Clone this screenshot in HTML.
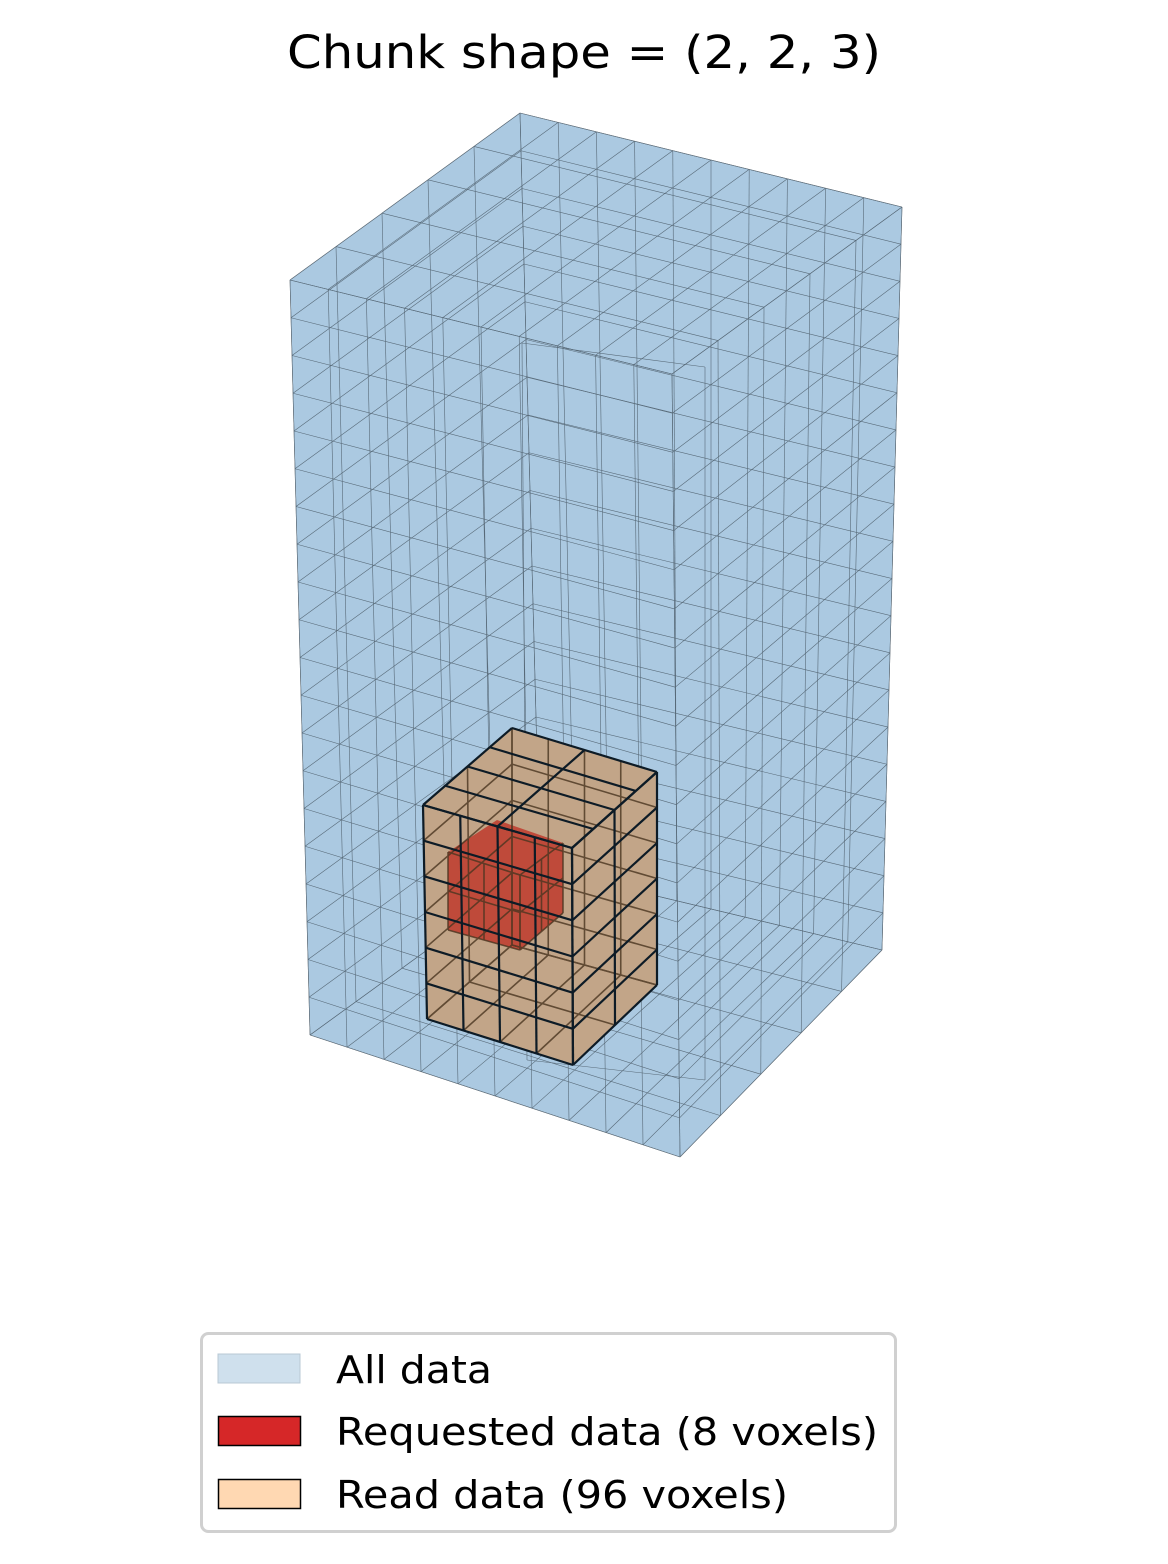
<!DOCTYPE html>
<html><head><meta charset="utf-8"><style>
html,body{margin:0;padding:0;background:#fff;}
svg{display:block;}
text{font-family:"DejaVu Sans","Liberation Sans",sans-serif;fill:#000;}
</style></head><body>
<svg id="s" width="1168" height="1564" viewBox="0 0 1168 1564" xmlns="http://www.w3.org/2000/svg">
<text x="584" y="68" font-size="45" text-anchor="middle" textLength="594" lengthAdjust="spacingAndGlyphs">Chunk shape = (2, 2, 3)</text>
<polygon points="290,280 520,113 902,207 882,950 680,1157 310,1035" fill="#abc9e1"/>
<g id="bg" stroke="#3c4a55" stroke-width="0.6" fill="none" opacity="0.75"></g>
<polygon points="423,805 512,728 657,772 657,985 572,1065 427,1019" fill="#c2a588"/>
<polygon points="448,852 497,820 563,843 563,913 520,950 448,930" fill="#bf4a3a"/>
<g id="rd" stroke="#4a3520" stroke-width="1.6" fill="none" opacity="0.8"></g>
<g id="fg" stroke="#0d1b26" stroke-width="2.2" fill="none"></g>
<rect x="201.5" y="1333.5" width="694" height="198" rx="7" fill="#fff" stroke="#d0d0d0" stroke-width="3"/>
<rect x="218" y="1354" width="82" height="29" fill="#cfe0ed" stroke="#b8c8d4" stroke-width="1"/>
<rect x="218.5" y="1416.5" width="82" height="29" fill="#d62728" stroke="#000" stroke-width="1.5"/>
<rect x="218.5" y="1479.5" width="82" height="29" fill="#ffd8b2" stroke="#000" stroke-width="1.5"/>
<text x="336" y="1383" font-size="38" textLength="156" lengthAdjust="spacingAndGlyphs">All data</text>
<text x="336" y="1445" font-size="38" textLength="542" lengthAdjust="spacingAndGlyphs">Requested data (8 voxels)</text>
<text x="336" y="1508" font-size="38" textLength="452" lengthAdjust="spacingAndGlyphs">Read data (96 voxels)</text>
</svg>
<script>
function L(g,a,b){var l=document.createElementNS("http://www.w3.org/2000/svg","line");l.setAttribute("x1",a[0]);l.setAttribute("y1",a[1]);l.setAttribute("x2",b[0]);l.setAttribute("y2",b[1]);document.getElementById(g).appendChild(l);}
function lp(a,b,t){return [a[0]+(b[0]-a[0])*t,a[1]+(b[1]-a[1])*t];}
function face(g,p0,p1,p2,p3,nu,nv){
 for(var i=0;i<=nu;i++){L(g,lp(p0,p1,i/nu),lp(p3,p2,i/nu));}
 for(var j=0;j<=nv;j++){L(g,lp(p0,p3,j/nv),lp(p1,p2,j/nv));}
}
var A=[290,280],B=[520,113],C=[902,207],D=[672,374];
var Ab=[310,1035],Bb=[540,868],Cb=[882,950],Db=[680,1157];
face("bg",A,D,Db,Ab,10,20);
face("bg",D,C,Cb,Db,5,20);
face("bg",A,B,C,D,5,10);
face("bg",B,C,Cb,Bb,10,20);
face("bg",A,B,Bb,Ab,5,20);
face("bg",Ab,Db,Cb,Bb,10,5);
face("bg",[522,343],[705,367],[705,1080],[527,1060],1,1);
var a=[423,805],b=[512,728],c=[657,772],d=[572,848];
var ab=[427,1019],bb=[512,945],cb=[657,985],db=[573,1065];
face("rd",b,c,cb,bb,4,6);
face("rd",a,b,bb,ab,2,6);
face("rd",ab,bb,cb,db,2,4);
face("fg",a,d,db,ab,4,6);
face("fg",d,c,cb,db,2,6);
face("fg",a,b,c,d,4,2);
face("rd",[448,852],[520,875],[520,950],[448,930],2,2);
face("rd",[520,875],[563,843],[563,913],[520,950],2,2);
</script>
</body></html>
